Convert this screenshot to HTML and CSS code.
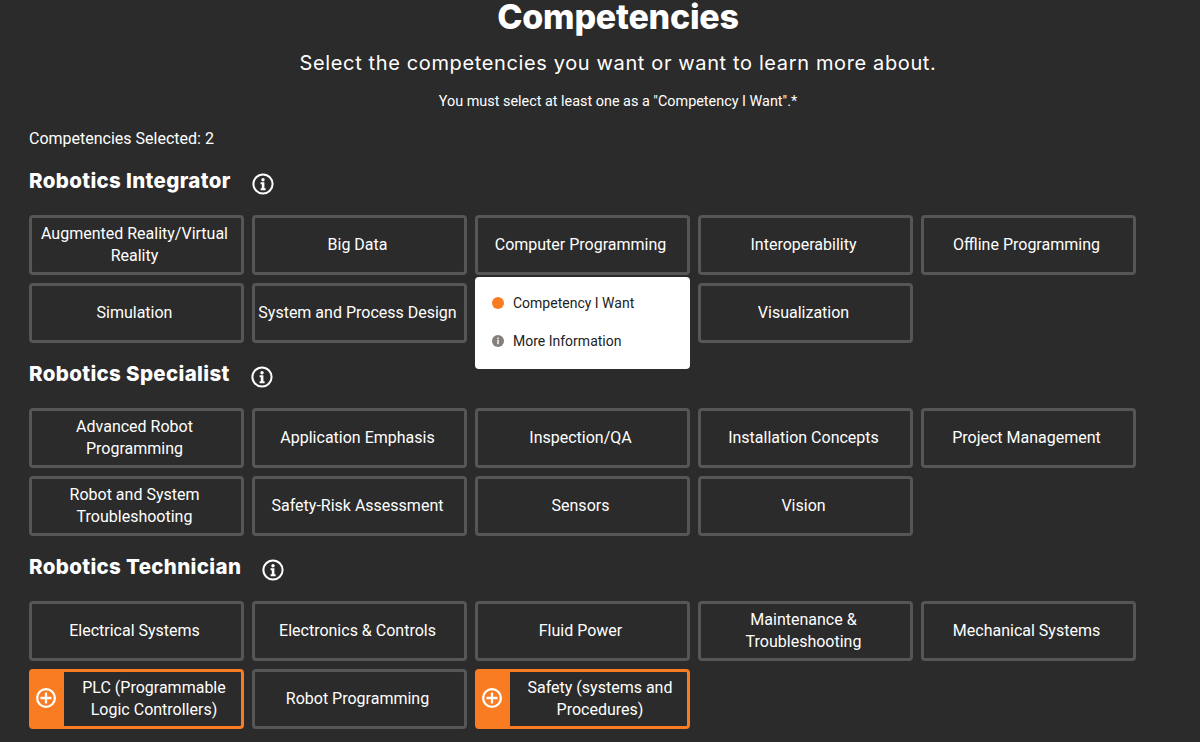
FILE: index.html
```html
<!DOCTYPE html>
<html lang="en">
<head>
<meta charset="utf-8">
<title>Competencies</title>
<link rel="stylesheet" href="styles.css">
</head>
<body>
<main class="page">
  <header class="intro">
    <h1 class="title">Competencies</h1>
    <p class="subtitle">Select the competencies you want or want to learn more about.</p>
    <p class="note">You must select at least one as a "Competency I Want".*</p>
  </header>
  <p class="count">Competencies Selected: 2</p>

  <section class="group">
    <div class="group-head">
      <h2 class="group-title">Robotics Integrator</h2>
      <svg class="info" viewBox="0 0 22 22" aria-hidden="true"><circle cx="11" cy="11" r="9.6" fill="none" stroke="#fff" stroke-width="2"/><circle cx="11" cy="6.7" r="1.7" fill="#fff"/><path d="M8.6 9.3h3.8v6h1.2v1.9H8.6v-1.9h1.2v-4.1H8.6z" fill="#fff"/></svg>
    </div>
    <div class="grid">
      <button class="chip">Augmented Reality/Virtual Reality</button>
      <button class="chip">Big Data</button>
      <div class="chip-wrap">
        <button class="chip">Computer Programming</button>
        <div class="menu">
          <div class="menu-item"><span class="dot"></span>Competency I Want</div>
          <div class="menu-item"><svg class="menu-info" viewBox="0 0 12 12" aria-hidden="true"><circle cx="6" cy="6" r="6" fill="#857f7b"/><circle cx="6" cy="3.4" r="1" fill="#e6e6e6"/><rect x="5.1" y="5" width="1.8" height="4.2" fill="#e6e6e6"/></svg>More Information</div>
        </div>
      </div>
      <button class="chip">Interoperability</button>
      <button class="chip">Offline Programming</button>
      <button class="chip">Simulation</button>
      <button class="chip">System and Process Design</button>
      <button class="chip"></button>
      <button class="chip">Visualization</button>
    </div>
  </section>

  <section class="group">
    <div class="group-head">
      <h2 class="group-title">Robotics Specialist</h2>
      <svg class="info" viewBox="0 0 22 22" aria-hidden="true"><circle cx="11" cy="11" r="9.6" fill="none" stroke="#fff" stroke-width="2"/><circle cx="11" cy="6.7" r="1.7" fill="#fff"/><path d="M8.6 9.3h3.8v6h1.2v1.9H8.6v-1.9h1.2v-4.1H8.6z" fill="#fff"/></svg>
    </div>
    <div class="grid">
      <button class="chip">Advanced Robot Programming</button>
      <button class="chip">Application Emphasis</button>
      <button class="chip">Inspection/QA</button>
      <button class="chip">Installation Concepts</button>
      <button class="chip">Project Management</button>
      <button class="chip">Robot and System Troubleshooting</button>
      <button class="chip">Safety-Risk Assessment</button>
      <button class="chip">Sensors</button>
      <button class="chip">Vision</button>
    </div>
  </section>

  <section class="group">
    <div class="group-head">
      <h2 class="group-title">Robotics Technician</h2>
      <svg class="info" viewBox="0 0 22 22" aria-hidden="true"><circle cx="11" cy="11" r="9.6" fill="none" stroke="#fff" stroke-width="2"/><circle cx="11" cy="6.7" r="1.7" fill="#fff"/><path d="M8.6 9.3h3.8v6h1.2v1.9H8.6v-1.9h1.2v-4.1H8.6z" fill="#fff"/></svg>
    </div>
    <div class="grid">
      <button class="chip">Electrical Systems</button>
      <button class="chip">Electronics &amp; Controls</button>
      <button class="chip">Fluid Power</button>
      <button class="chip">Maintenance &amp; Troubleshooting</button>
      <button class="chip">Mechanical Systems</button>
      <button class="chip chip-on">
        <span class="chip-tab"><svg class="plus" viewBox="0 0 20 20" aria-hidden="true"><circle cx="10" cy="10" r="8.85" fill="none" stroke="#fff" stroke-width="2.3"/><path d="M10 4.5v11M4.5 10h11" stroke="#fff" stroke-width="2.3" fill="none"/></svg></span>
        <span class="chip-text">PLC (Programmable Logic Controllers)</span>
      </button>
      <button class="chip">Robot Programming</button>
      <button class="chip chip-on">
        <span class="chip-tab"><svg class="plus" viewBox="0 0 20 20" aria-hidden="true"><circle cx="10" cy="10" r="8.85" fill="none" stroke="#fff" stroke-width="2.3"/><path d="M10 4.5v11M4.5 10h11" stroke="#fff" stroke-width="2.3" fill="none"/></svg></span>
        <span class="chip-text">Safety (systems and Procedures)</span>
      </button>
    </div>
  </section>
</main>
</body>
</html>
```
FILE: styles.css
```css
* { box-sizing: border-box; }
html, body { margin: 0; height: 742px; overflow: hidden; }
body { background: #2b2b2b; color: #fff; font-family: Roboto, sans-serif; }
.page { padding: 0 0 0 29px; }
.intro { padding-left: 7px; text-align: center; }
.title { margin: 0; font: 800 34px/34px Inter, sans-serif; letter-spacing: -0.25px; }
.subtitle { margin: 12px 0 0; font: 400 20px/34px Inter, sans-serif; letter-spacing: 0.63px; }
.note { margin: 12px 0 0; font: 400 14.4px/20px Roboto, sans-serif; }
.count { margin: 16px 0 0; font: 400 16px/22px Roboto, sans-serif; }
.group-head { display: flex; align-items: center; gap: 21px; height: 65px; }
.group-title { margin: 0 0 4px; padding-top: 1px; font: 800 20.5px/28px Inter, sans-serif; letter-spacing: 0.35px; }
.info { width: 22px; height: 22px; margin-top: 2px; }
.grid { display: grid; grid-template-columns: repeat(5, 215px); grid-auto-rows: 60px; gap: 8px; }
.chip-wrap { position: relative; }
.chip { display: flex; align-items: center; justify-content: center; width: 215px; height: 60px; padding: 0 4px 0 0; background: #2b2b2b; border: 3px solid #565656; border-radius: 4px; color: #fff; font: 400 16px/22px Roboto, sans-serif; text-align: center; }
.chip-on { padding: 0; border-color: #f97b22; justify-content: flex-start; }
.chip-tab { flex: 0 0 32px; align-self: stretch; display: flex; align-items: center; padding: 0 0 2px 4px; background: #f97b22; }
.chip-text { flex: 1; padding: 0 1px 0 4px; }
.plus { width: 20px; height: 20px; }
.menu { position: absolute; z-index: 2; left: 0; top: 62px; width: 215px; height: 92px; padding: 7px 17px; background: #fff; border-radius: 4px; color: #222; font: 400 14px/38px Roboto, sans-serif; }
.menu-item { display: flex; align-items: center; gap: 9px; height: 38px; }
.dot { width: 12px; height: 12px; border-radius: 50%; background: #f97b22; }
.menu-info { width: 12px; height: 12px; }
```
